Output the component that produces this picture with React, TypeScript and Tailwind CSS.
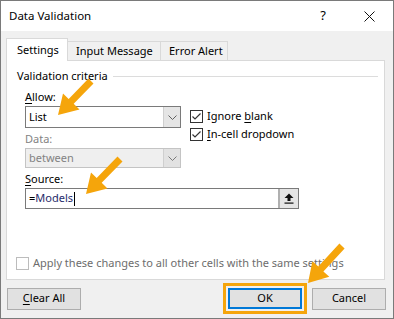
import React from "react";

const font = { fontFamily: '"Noto Sans", "Open Sans", sans-serif' };

type Pt = [number, number];

// arrow polygon from tail to tip (drawn over the dialog)
function arrowPoints(tail: Pt, tip: Pt, shaft = 7, headLen = 19, headW = 23) {
  const dx = tip[0] - tail[0];
  const dy = tip[1] - tail[1];
  const len = Math.hypot(dx, dy);
  const ux = dx / len;
  const uy = dy / len;
  const nx = -uy;
  const ny = ux;
  const bx = tip[0] - ux * headLen;
  const by = tip[1] - uy * headLen;
  const p = (x: number, y: number) => `${x.toFixed(1)},${y.toFixed(1)}`;
  return [
    p(tail[0] + (nx * shaft) / 2, tail[1] + (ny * shaft) / 2),
    p(bx + (nx * shaft) / 2, by + (ny * shaft) / 2),
    p(bx + (nx * headW) / 2, by + (ny * headW) / 2),
    p(tip[0], tip[1]),
    p(bx - (nx * headW) / 2, by - (ny * headW) / 2),
    p(bx - (nx * shaft) / 2, by - (ny * shaft) / 2),
    p(tail[0] - (nx * shaft) / 2, tail[1] - (ny * shaft) / 2),
  ].join(" ");
}

function Chevron({ color = "#606060" }: { color?: string }) {
  return (
    <svg width="9" height="5" viewBox="0 0 9 5">
      <polyline points="0.5,0.5 4.5,4.5 8.5,0.5" fill="none" stroke={color} strokeWidth="1" />
    </svg>
  );
}

function Check({ u, rest, pre = "" }: { u: string; rest: string; pre?: string }) {
  return (
    <div className="flex items-center h-[18px]">
      <div className="w-[13px] h-[13px] border border-[#333333] bg-white flex items-center justify-center">
        <svg width="11" height="11" viewBox="0 0 11 11">
          <polyline points="1.5,5.5 4,8 9.5,2.5" fill="none" stroke="#333333" strokeWidth="1.2" />
        </svg>
      </div>
      <span className="ml-[4px] text-[11px] text-black leading-[16px] whitespace-nowrap">
        {pre}
        <span className="underline underline-offset-2">{u}</span>
        {rest}
      </span>
    </div>
  );
}

export default function App() {
  return (
    <div className="relative w-[394px] h-[319px] border border-[#7a7a7a] bg-[#f0f0f0] overflow-hidden text-[11px]" style={font}>
      {/* title bar */}
      <div className="h-[30px] bg-white flex items-center">
        <span className="ml-[8px] text-[11.5px] text-black">Data Validation</span>
        <span className="ml-auto text-[13px] text-black mr-[38px]">?</span>
        <svg className="mr-[18px]" width="11" height="11" viewBox="0 0 11 11">
          <path d="M0.5 0.5 L10.5 10.5 M10.5 0.5 L0.5 10.5" stroke="#111" strokeWidth="1" />
        </svg>
      </div>

      {/* tabs */}
      <div className="flex items-end pt-[7px] pl-[5px] h-[29px] whitespace-nowrap">
        <div className="relative z-10 -mb-px w-[62px] h-[23px] bg-white border border-b-0 border-[#d9d9d9] flex items-center pl-[10px] text-black">
          Settings
        </div>
        <div className="h-[19px] w-[93px] border-t border-r border-[#d9d9d9] flex items-center pl-[8px] text-black">
          Input Message
        </div>
        <div className="h-[19px] w-[67px] border-t border-r border-[#d9d9d9] flex items-center pl-[8px] text-black">
          Error Alert
        </div>
      </div>

      {/* panel */}
      <div className="ml-[5px] w-[379px] h-[220px] bg-white border border-[#d9d9d9] flex flex-col">
        <div className="flex items-center h-[16px] mt-[7px] pl-[10px] pr-[6px]">
          <span className="text-black leading-[16px]">Validation criteria</span>
          <div className="flex-1 h-px bg-[#dcdcdc] ml-[5px]" />
        </div>

        <div className="pl-[18px] flex flex-col">
          <div className="mt-[5px] leading-[16px] text-black">
            <span className="underline underline-offset-2">A</span>llow:
          </div>
          <div className="flex mt-[1px]">
            <div className="w-[156px] flex flex-col">
              <div className="h-[22px] border border-[#7a7a7a] bg-white flex">
                <span className="flex-1 pl-[3px] leading-[20px] text-black">List</span>
                <div className="w-[17px] bg-[#e5e5e5] border-l border-[#cfcfcf] flex items-center justify-center">
                  <Chevron />
                </div>
              </div>
              <div className="mt-[3px] leading-[16px] text-[#838383]">Data:</div>
              <div className="mt-[1px] h-[20px] border border-[#c4c4c4] bg-[#efefef] flex">
                <span className="flex-1 pl-[3px] leading-[18px] text-[#838383]">between</span>
                <div className="w-[17px] bg-[#e2e2e2] border-l border-[#cfcfcf] flex items-center justify-center">
                  <Chevron color="#7a7a7a" />
                </div>
              </div>
            </div>
            <div className="ml-[9px] flex flex-col pt-[1px]">
              <Check pre="Ignore " u="b" rest="lank" />
              <Check u="I" rest="n-cell dropdown" />
            </div>
          </div>
          <div className="mt-[3px] leading-[16px] text-black">
            <span className="underline underline-offset-2">S</span>ource:
          </div>
          <div className="mt-[1px] w-[274px] h-[21px] border border-[#7a7a7a] bg-white flex">
            <div className="flex-1 flex items-center pl-[3px]">
              <span className="text-black">=</span>
              <span className="text-[#1f2b6b]">Models</span>
              <span className="ml-[1px] w-px h-[14px] bg-black" />
            </div>
            <div className="w-[20px] bg-[#e5e5e5] border-l-2 border-[#b0b0b0] flex items-center justify-center">
              <svg width="10" height="11" viewBox="0 0 10 11">
                <path d="M5 0.5 L9.5 5 L6.5 5 L6.5 8 L3.5 8 L3.5 5 L0.5 5 Z" fill="#111" />
                <rect x="0.5" y="9.5" width="9" height="1.2" fill="#111" />
              </svg>
            </div>
          </div>
        </div>

        <div className="mt-auto mb-[8px] ml-[9px] flex items-center h-[16px]">
          <div className="w-[13px] h-[13px] border border-[#bcbcbc] bg-white" />
          <span className="ml-[4px] leading-[16px] text-[#6d6d6d] whitespace-nowrap">
            Apply these changes to all other cells with the same settings
          </span>
        </div>
      </div>

      {/* buttons */}
      <div className="flex items-center pl-[6px] mt-[3px] h-[31px]">
        <div className="w-[74px] h-[22px] bg-[#e1e1e1] border border-[#adadad] flex items-center justify-center text-black">
          <span>
            <span className="underline underline-offset-2">C</span>lear All
          </span>
        </div>
        <div className="ml-[142px] border-[3px] border-[#f5a50b] p-[2px]">
          <div className="w-[74px] h-[21px] bg-[#e1e1e1] border-2 border-[#0078d7] flex items-center justify-center text-black">
            OK
          </div>
        </div>
        <div className="ml-[5px] w-[74px] h-[22px] bg-[#e1e1e1] border border-[#adadad] flex items-center justify-center text-black">
          Cancel
        </div>
      </div>

      {/* callout arrows */}
      <svg className="absolute left-[-1px] top-[-1px] pointer-events-none" width="394" height="319" viewBox="0 0 394 319">
        <polygon points={arrowPoints([91, 81], [58, 115])} fill="#f5a50b" />
        <polygon points={arrowPoints([120, 159], [86, 194])} fill="#f5a50b" />
        <polygon points={arrowPoints([342, 246], [308, 283])} fill="#f5a50b" />
      </svg>
    </div>
  );
}
